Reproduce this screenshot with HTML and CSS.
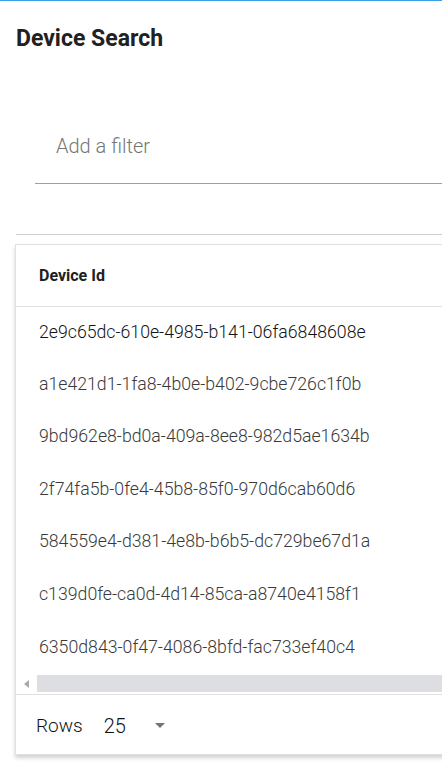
FILE: index.html
```html
<!DOCTYPE html>
<html>
<head>
<meta charset="utf-8">
<link rel="stylesheet" href="styles.css">
</head>
<body>
<div class="page">
  <div class="topbar"></div>
  <h1 class="title">Device Search</h1>
  <div class="filter">
    <div class="filter-input">Add a filter</div>
  </div>
  <div class="divider"></div>
  <div class="card">
    <div class="thead">Device Id</div>
    <div class="tbody">
      <div class="row first">2e9c65dc-610e-4985-b141-06fa6848608e</div>
      <div class="row">a1e421d1-1fa8-4b0e-b402-9cbe726c1f0b</div>
      <div class="row">9bd962e8-bd0a-409a-8ee8-982d5ae1634b</div>
      <div class="row">2f74fa5b-0fe4-45b8-85f0-970d6cab60d6</div>
      <div class="row">584559e4-d381-4e8b-b6b5-dc729be67d1a</div>
      <div class="row">c139d0fe-ca0d-4d14-85ca-a8740e4158f1</div>
      <div class="row">6350d843-0f47-4086-8bfd-fac733ef40c4</div>
    </div>
    <div class="hscroll">
      <span class="arrow"></span>
      <div class="track"></div>
    </div>
    <div class="footer">
      <span class="rows-label">Rows</span>
      <span class="rows-value">25</span>
      <span class="caret"></span>
    </div>
  </div>
</div>
</body>
</html>
```

FILE: styles.css
```css
html, body {
  margin: 0;
  padding: 0;
  background: #fff;
}
body {
  font-family: Roboto, "Liberation Sans", sans-serif;
  color: #212121;
}
.page {
  width: 442px;
  height: 768px;
  overflow: hidden;
  position: relative;
}
.topbar {
  height: 1px;
  background: #3b9ee6;
}
.title {
  margin: 0;
  padding: 24px 0 0 16px;
  font-size: 23px;
  line-height: 27px;
  font-weight: 700;
  color: #212121;
  height: 80px;
  box-sizing: content-box;
}
.filter {
  margin-left: 35px;
  width: 600px;
  height: 53px;
  border-bottom: 1px solid #a0a0a0;
  margin-top: 25px;
}
.filter-input {
  padding-left: 21px;
  padding-top: 4px;
  font-size: 20px;
  line-height: 24px;
  font-weight: 300;
  color: #757575;
}
.divider {
  margin-top: 50px;
  margin-left: 16px;
  width: 600px;
  height: 1px;
  background: #cfcfcf;
}
.card {
  margin-top: 9px;
  margin-left: 15px;
  width: 600px;
  border: 1px solid #e0e0e0;
  background: #fff;
  box-shadow: 0 3px 4px rgba(0,0,0,0.18);
}
.thead {
  height: 61px;
  line-height: 61px;
  padding-left: 23px;
  font-size: 16px;
  font-weight: 700;
  color: #212121;
  border-bottom: 1px solid #e0e0e0;
}
.row {
  height: 52.6px;
  line-height: 48px;
  padding-left: 23px;
  font-size: 17.7px;
  font-weight: 300;
  color: #3a3a3a;
}
.row.first {
  color: #141414;
  line-height: 50px;
}
.hscroll {
  display: flex;
  align-items: center;
  height: 17px;
  border-bottom: 1px solid #e0e0e0;
  padding-bottom: 2px;
}
.arrow {
  width: 0;
  height: 0;
  margin-left: 8px;
  margin-right: 8px;
  border-top: 4px solid transparent;
  border-bottom: 4px solid transparent;
  border-right: 5px solid #a8a8a8;
}
.track {
  flex: 1;
  height: 17px;
  background: #dcdee1;
}
.footer {
  display: flex;
  align-items: center;
  height: 59px;
  padding-left: 20px;
  padding-top: 2px;
  box-sizing: border-box;
  font-size: 19px;
  font-weight: 300;
  color: #111;
}
.rows-label {
  margin-right: 21px;
}
.rows-value {
  font-size: 20px;
  margin-right: 29px;
}
.caret {
  width: 0;
  height: 0;
  border-left: 5px solid transparent;
  border-right: 5px solid transparent;
  border-top: 5px solid #757575;
}
```
